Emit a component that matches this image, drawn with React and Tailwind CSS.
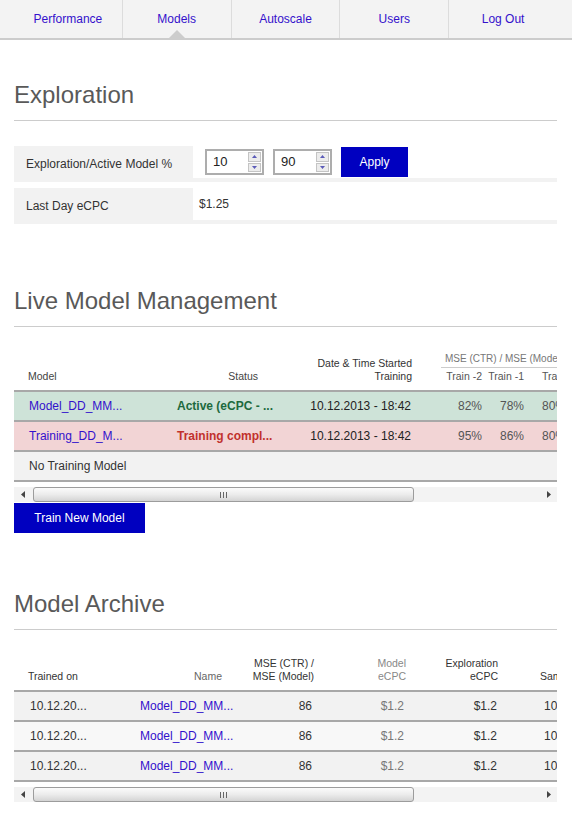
import React from 'react';

const TABS = ['Performance', 'Models', 'Autoscale', 'Users', 'Log Out'];

const LIVE_ROWS = [
  { model: 'Model_DD_MM...', status: 'Active (eCPC - ...', statusColor: 'text-[#1d6a3e]', date: '10.12.2013 - 18:42', mse: ['82%', '78%', '80%'], bg: 'bg-[#cee3d8]' },
  { model: 'Training_DD_M...', status: 'Training compl...', statusColor: 'text-[#c1312d]', date: '10.12.2013 - 18:42', mse: ['95%', '86%', '80%'], bg: 'bg-[#f2d4d5]' },
];

const ARCHIVE_ROWS = [
  { trained: '10.12.20...', name: 'Model_DD_MM...', mse: '86', modelEcpc: '$1.2', explEcpc: '$1.2', samples: '1000', bg: 'bg-[#f2f2f2]' },
  { trained: '10.12.20...', name: 'Model_DD_MM...', mse: '86', modelEcpc: '$1.2', explEcpc: '$1.2', samples: '1000', bg: 'bg-[#f8f8f8]' },
  { trained: '10.12.20...', name: 'Model_DD_MM...', mse: '86', modelEcpc: '$1.2', explEcpc: '$1.2', samples: '1000', bg: 'bg-[#f2f2f2]' },
];

const TD = 'py-[7px] leading-[14px] border-b-2 border-[#a8a8a8] whitespace-nowrap overflow-hidden';
const TH = 'font-normal align-bottom pb-[7px] leading-[13px] border-b-2 border-[#a8a8a8] whitespace-nowrap text-[10.5px]';

function SectionTitle({ children, className = '' }) {
  return (
    <h2 className={`text-[24px] leading-[28px] font-normal text-[#595959] pb-[11px] border-b border-[#cccccc] ${className}`}>
      {children}
    </h2>
  );
}

function SpinButton({ up }) {
  return (
    <div className="flex flex-1 items-center justify-center border border-[#c4c4c4] bg-[#ececec]">
      <svg width="5" height="3" viewBox="0 0 5 3">
        <path d={up ? 'M0 3h5L2.5 0z' : 'M0 0h5L2.5 3z'} fill="#5b5bb8" />
      </svg>
    </div>
  );
}

function NumberBox({ value }) {
  return (
    <div className="flex h-[26px] w-[59px] items-stretch border-2 border-[#adadad] bg-white">
      <input
        readOnly
        value={value}
        className="w-0 min-w-0 flex-1 bg-transparent pl-[6px] text-[13px] text-[#222] outline-none"
      />
      <div className="my-[1px] mr-[1px] flex w-[13px] flex-col gap-px">
        <SpinButton up />
        <SpinButton />
      </div>
    </div>
  );
}

// classic horizontal scrollbar under the wide tables
function HScrollbar() {
  return (
    <div className="mt-[5px] flex h-[15px] items-center bg-[#f3f3f3]">
      <div className="flex w-[17px] justify-center">
        <svg width="4" height="7" viewBox="0 0 4 7"><path d="M4 0V7L0 3.5Z" fill="#444" /></svg>
      </div>
      <div className="ml-[2px] flex h-full w-[381px] items-center justify-center rounded-[3px] border border-[#9c9c9c] bg-gradient-to-b from-[#fbfbfb] via-[#ececec] to-[#d4d4d4]">
        <div className="flex gap-[2px]">
          <span className="h-[6px] w-px bg-[#666]" />
          <span className="h-[6px] w-px bg-[#666]" />
          <span className="h-[6px] w-px bg-[#666]" />
        </div>
      </div>
      <div className="flex-1" />
      <div className="flex w-[17px] justify-center">
        <svg width="4" height="7" viewBox="0 0 4 7"><path d="M0 0V7L4 3.5Z" fill="#444" /></svg>
      </div>
    </div>
  );
}

export default function App() {
  return (
    <div className="min-h-screen bg-white pb-[20px] font-['Liberation_Sans',Arial,sans-serif] text-[12px] text-[#333]">
      {/* Top navigation */}
      <nav className="border-b-2 border-[#cccccc] bg-[#f3f3f3]">
        <ul className="flex h-[38px] pl-[14px] pr-[15px]">
          {TABS.map((tab, i) => (
            <li
              key={tab}
              className={`relative flex flex-1 items-center justify-center ${i > 0 ? 'border-l border-[#dcdcdc]' : ''}`}
            >
              <a className="text-[12px] text-[#3311cc]">{tab}</a>
              {tab === 'Models' && (
                <span className="absolute bottom-0 left-1/2 h-0 w-0 -translate-x-1/2 border-x-[8px] border-b-[8px] border-x-transparent border-b-[#cccccc]" />
              )}
            </li>
          ))}
        </ul>
      </nav>

      <main className="pl-[14px] pr-[15px]">
        {/* Exploration */}
        <SectionTitle className="mt-[41px]">Exploration</SectionTitle>

        <div className="mt-[25px] flex h-[36px]">
          <div className="flex w-[179px] items-center bg-[#f2f2f2] pl-[12px]">Exploration/Active Model %</div>
          <div className="flex flex-1 items-center gap-[9px] border-b-4 border-[#f2f2f2] pl-[12px]">
            <NumberBox value="10" />
            <NumberBox value="90" />
            <button className="h-[30px] w-[67px] bg-[#0000c0] text-[12px] text-white">Apply</button>
          </div>
        </div>
        <div className="mt-[6px] flex h-[36px]">
          <div className="flex w-[179px] items-center bg-[#f2f2f2] pl-[12px]">Last Day eCPC</div>
          <div className="flex flex-1 items-center border-b-4 border-[#f2f2f2] pl-[6px]">$1.25</div>
        </div>

        {/* Live Model Management */}
        <SectionTitle className="mt-[63px]">Live Model Management</SectionTitle>

        <div className="mt-[25px] overflow-hidden">
          <table className="w-[720px] table-fixed border-separate border-spacing-0">
            <colgroup>
              <col className="w-[149px]" />
              <col className="w-[124px]" />
              <col className="w-[139px]" />
              <col className="w-[58px]" />
              <col className="w-[42px]" />
              <col className="w-[60px]" />
              <col className="w-[148px]" />
            </colgroup>
            <thead>
              <tr>
                <th rowSpan={2} className={`${TH} pl-[14px] text-left text-[#444]`}>Model</th>
                <th rowSpan={2} className={`${TH} pr-[29px] text-right text-[#444]`}>Status</th>
                <th rowSpan={2} className={`${TH} pr-[14px] text-right text-[#333]`}>
                  Date &amp; Time Started<br />Training
                </th>
                <th colSpan={3} className="whitespace-nowrap pl-[15px] text-left font-normal">
                  <div className="border-b border-[#cccccc] pb-[2px] pl-[4px] text-[10px] leading-[13px] text-[#777]">
                    MSE (CTR) / MSE (Model)
                  </div>
                </th>
                <th rowSpan={2} className={`${TH} pl-[14px] text-left text-[#444]`}>Actions</th>
              </tr>
              <tr>
                <th className={`${TH} pt-[2px] pr-[2px] text-right text-[#555]`}>Train -2</th>
                <th className={`${TH} pt-[2px] pr-[2px] text-right text-[#555]`}>Train -1</th>
                <th className={`${TH} pt-[2px] pl-[16px] text-left text-[#555]`}>Train 0</th>
              </tr>
            </thead>
            <tbody>
              {LIVE_ROWS.map((row) => (
                <tr key={row.model} className={row.bg}>
                  <td className={`${TD} pl-[15px] text-[#3311cc]`}>{row.model}</td>
                  <td className={`${TD} pl-[14px] font-bold ${row.statusColor}`}>{row.status}</td>
                  <td className={`${TD} pr-[15px] text-right text-[#222]`}>{row.date}</td>
                  <td className={`${TD} pr-[2px] text-right text-[#555]`}>{row.mse[0]}</td>
                  <td className={`${TD} pr-[2px] text-right text-[#555]`}>{row.mse[1]}</td>
                  <td className={`${TD} pl-[16px] text-[#555]`}>{row.mse[2]}</td>
                  <td className={`${TD} pl-[14px] text-[#3311cc]`}>Details</td>
                </tr>
              ))}
              <tr className="bg-[#f2f2f2]">
                <td colSpan={7} className={`${TD} pl-[15px] text-[#333]`}>No Training Model</td>
              </tr>
            </tbody>
          </table>
        </div>
        <HScrollbar />

        <button className="mt-[1px] h-[30px] w-[131px] bg-[#0000c0] text-[12px] text-white">Train New Model</button>

        {/* Model Archive */}
        <SectionTitle className="mt-[57px]">Model Archive</SectionTitle>

        <div className="mt-[27px] overflow-hidden">
          <table className="w-[720px] table-fixed border-separate border-spacing-0">
            <colgroup>
              <col className="w-[112px]" />
              <col className="w-[110px]" />
              <col className="w-[92px]" />
              <col className="w-[92px]" />
              <col className="w-[92px]" />
              <col className="w-[110px]" />
              <col className="w-[112px]" />
            </colgroup>
            <thead>
              <tr>
                <th className={`${TH} pl-[14px] text-left text-[#333]`}>Trained on</th>
                <th className={`${TH} pr-[14px] text-right text-[#666]`}>Name</th>
                <th className={`${TH} pr-[14px] text-right text-[#333]`}>MSE (CTR) /<br />MSE (Model)</th>
                <th className={`${TH} pr-[14px] text-right text-[#888]`}>Model<br />eCPC</th>
                <th className={`${TH} pr-[14px] text-right text-[#333]`}>Exploration<br />eCPC</th>
                <th className={`${TH} pl-[28px] text-left text-[#333]`}>Samples</th>
                <th className={`${TH} pl-[14px] text-left text-[#333]`}>Status</th>
              </tr>
            </thead>
            <tbody>
              {ARCHIVE_ROWS.map((row, i) => (
                <tr key={i} className={row.bg}>
                  <td className={`${TD} pl-[16px] text-[#333]`}>{row.trained}</td>
                  <td className={`${TD} pl-[14px] text-[#3311cc]`}>{row.name}</td>
                  <td className={`${TD} pr-[16px] text-right text-[#333]`}>{row.mse}</td>
                  <td className={`${TD} pr-[16px] text-right text-[#777]`}>{row.modelEcpc}</td>
                  <td className={`${TD} pr-[15px] text-right text-[#333]`}>{row.explEcpc}</td>
                  <td className={`${TD} pl-[32px] text-[#333]`}>{row.samples}</td>
                  <td className={`${TD} pl-[14px] text-[#333]`}>Archived</td>
                </tr>
              ))}
            </tbody>
          </table>
        </div>
        <HScrollbar />
      </main>
    </div>
  );
}
